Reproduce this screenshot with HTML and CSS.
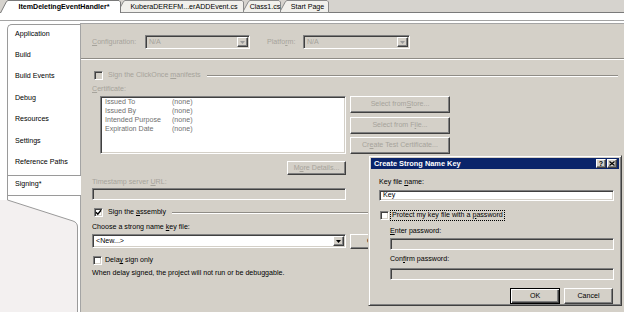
FILE: index.html
```html
<!DOCTYPE html>
<html>
<head>
<meta charset="utf-8">
<title>Signing</title>
<link rel="stylesheet" href="styles.css">
</head>
<body>
<div class="tabbar">
  <div class="tab t1 active">
    <svg class="tabshape" width="121" height="13"><polyline points="0.5,13 6.5,1.5 8,0.5 119,0.5 120.5,2 120.5,13" fill="#fff" stroke="#7a7a7a"/></svg>
    <span class="tabtext">ItemDeletingEventHandler*</span>
  </div>
  <div class="tab t2">
    <svg class="tabshape" width="127" height="13"><polygon points="0.5,12.5 6.5,1.5 8,0.5 125,0.5 126.5,2 126.5,12.5" fill="#f1f0ec" stroke="#8a8a8a"/></svg>
    <span class="tabtext">KuberaDEREFM...erADDEvent.cs</span>
  </div>
  <div class="tab t3">
    <svg class="tabshape" width="39" height="13"><polygon points="0.5,12.5 6.5,1.5 8,0.5 37,0.5 38.5,2 38.5,12.5" fill="#f1f0ec" stroke="#8a8a8a"/></svg>
    <span class="tabtext">Class1.cs</span>
  </div>
  <div class="tab t4">
    <svg class="tabshape" width="50" height="13"><polygon points="0.5,12.5 6.5,1.5 8,0.5 48,0.5 49.5,2 49.5,12.5" fill="#f1f0ec" stroke="#8a8a8a"/></svg>
    <span class="tabtext">Start Page</span>
  </div>
</div>
<div class="strip"></div>
<div class="main">
  <nav class="nav">
    <div class="navbox">
      <div class="navitem">Application</div>
      <div class="navitem">Build</div>
      <div class="navitem">Build Events</div>
      <div class="navitem">Debug</div>
      <div class="navitem">Resources</div>
      <div class="navitem">Settings</div>
      <div class="navitem">Reference Paths</div>
      <div class="navitem sel">Signing*</div>
    </div>
    <svg class="navtail" width="80" height="116" viewBox="0 0 80 116">
      <path d="M0 4 H7.5 L73 25 Q77.5 26.5 77.5 31 V116 H0 Z" fill="#f3f0f0"/>
      <path d="M7.5 0 V4 L73 25 Q77.5 26.5 77.5 31 V116" fill="none" stroke="#9a9a9a"/>
    </svg>
  </nav>
  <main class="content">
    <div class="cfg">
      <span class="dis cfg-l1"><u>C</u>onfiguration:</span>
      <span class="combo dis w105"><span class="ctext">N/A</span><span class="drop"><svg width="5" height="3"><polygon points="0,0 5,0 2.5,3" fill="#9a9a9a"/></svg></span></span>
      <span class="dis cfg-l2">Platfo<u>r</u>m:</span>
      <span class="combo dis w107"><span class="ctext">N/A</span><span class="drop"><svg width="5" height="3"><polygon points="0,0 5,0 2.5,3" fill="#9a9a9a"/></svg></span></span>
    </div>
    <div class="sep"></div>
    <div class="ghead gh1">
      <span class="chk dis"></span>
      <span class="dis">Sign the ClickOnce <u>m</u>anifests</span>
      <span class="gline"></span>
    </div>
    <div class="dis cert-l"><u>C</u>ertificate:</div>
    <div class="certrow">
      <div class="certbox">
        <div class="certline"><span class="k">Issued To</span><span>(none)</span></div>
        <div class="certline"><span class="k">Issued By</span><span>(none)</span></div>
        <div class="certline"><span class="k">Intended Purpose</span><span>(none)</span></div>
        <div class="certline"><span class="k">Expiration Date</span><span>(none)</span></div>
      </div>
      <div class="btncol">
        <span class="btn dis">Select from <u>S</u>tore...</span>
        <span class="btn dis">Select from F<u>i</u>le...</span>
        <span class="btn dis">Cr<u>e</u>ate Test Certificate...</span>
      </div>
    </div>
    <div class="morerow"><span class="btn dis more">M<u>o</u>re Details...</span></div>
    <div class="dis ts-l">Timestamp server <u>U</u>RL:</div>
    <div class="field dis ts"></div>
    <div class="ghead gh2">
      <span class="chk on"><svg width="7" height="7"><polyline points="1,3.2 2.8,5.2 6,1.2" fill="none" stroke="#000" stroke-width="1.4"/></svg></span>
      <span>Sign the <u>a</u>ssembly</span>
      <span class="gline"></span>
    </div>
    <div class="choose">Choose a strong name <u>k</u>ey file:</div>
    <div class="keyrow">
      <span class="combo w254"><span class="ctext">&lt;New...&gt;</span><span class="drop"><svg width="5" height="3"><polygon points="0,0 5,0 2.5,3" fill="#000"/></svg></span></span>
      <span class="btn chg">Change Password...</span>
    </div>
    <div class="delay"><span class="chk"></span><span>Dela<u>y</u> sign only</span></div>
    <div class="note">When delay signed, the project will not run or be debuggable.</div>
  </main>
</div>

<div class="dialog">
  <div class="dtitle">
    <span class="dtitle-text">Create Strong Name Key</span>
    <span class="tbtns">
      <span class="tb">?</span>
      <span class="tb"><svg width="6" height="5"><path d="M0.5 0.5 L5.5 4.5 M5.5 0.5 L0.5 4.5" stroke="#000" stroke-width="1.2"/></svg></span>
    </span>
  </div>
  <div class="dbody">
    <div class="dlbl first">Key file <u>n</u>ame:</div>
    <div class="field keyfield">Key</div>
    <div class="dchk"><span class="chk"></span><span class="focus">Protect my key file with a <u>p</u>assword</span></div>
    <div class="indent">
      <div class="dlbl l2"><u>E</u>nter password:</div>
      <div class="field dis pw"></div>
      <div class="dlbl l3">Con<u>f</u>irm password:</div>
      <div class="field dis pw pw2"></div>
    </div>
    <div class="dbtns">
      <span class="btn def">OK</span>
      <span class="btn cancel">Cancel</span>
    </div>
  </div>
</div>
</body>
</html>
```

FILE: styles.css
```css
* { box-sizing: border-box; }
html, body { margin: 0; padding: 0; }
body {
  width: 624px;
  height: 312px;
  overflow: hidden;
  position: relative;
  background: #fff;
  font-family: "Liberation Sans", Arial, sans-serif;
  font-size: 7.1px;
  line-height: 9px;
  color: #000;
}
u { text-decoration: underline; text-decoration-thickness: 0.6px; text-underline-offset: 1px; }
svg { display: block; }

/* ---------- document tabs ---------- */
.tabbar {
  display: flex;
  height: 13px;
  background: #d6d3ce;
  box-shadow: inset 0 -1px #7a7a7a;
}
.tab {
  position: relative;
  height: 13px;
  flex: none;
}
.tabshape { position: absolute; left: 0; top: 0; }
.tabtext {
  position: relative;
  display: flex;
  align-items: center;
  justify-content: center;
  height: 13px;
  padding-left: 7px;
  padding-top: 1px;
  white-space: nowrap;
}
.t1 { width: 121px; z-index: 4; }
.t1 .tabtext { font-weight: bold; }
.t2 { width: 127px; margin-left: -4px; z-index: 3; }
.t3 { width: 39px; margin-left: -2px; z-index: 2; }
.t4 { width: 50px; margin-left: -2px; z-index: 1; }

.strip {
  height: 8px;
  background: #fff;
  border-bottom: 1px solid #a4a4a4;
}

/* ---------- main ---------- */
.main {
  display: flex;
  height: 291px;
}
.nav {
  width: 80px;
  flex: none;
  background: #fff;
  padding-top: 3px;
  position: relative;
  z-index: 1;
  display: flex;
  flex-direction: column;
}
.navbox {
  margin-left: 7px;
  border-left: 1px solid #9a9a9a;
  border-top: 1px solid #9a9a9a;
  border-top-left-radius: 5px;
}
.navitem {
  height: 21.4px;
  display: flex;
  align-items: center;
  padding-left: 7px;
  padding-bottom: 3px;
  white-space: nowrap;
}
.navitem.sel {
  margin-right: -1px;
  background: #fff;
  border-top: 1px solid #9a9a9a;
  border-bottom: 1px solid #9a9a9a;
  padding-bottom: 2px;
}
.navtail { flex: none; }

.content {
  flex: 1;
  margin-top: 2px;
  border-top: 1px solid #a4a4a4;
  border-left: 1px solid #a4a4a4;
  background: #d4d0c8;
  padding: 11px 6px 0 11px;
}
.dis { color: #a6a39b; }

/* common controls */
.combo {
  display: flex;
  align-items: center;
  height: 14px;
  border: 1px solid;
  border-color: #808080 #fff #fff #808080;
  box-shadow: inset 1px 1px #404040, inset -1px -1px #d4d0c8;
  background: #fff;
  padding: 1px 1px 1px 2px;
}
.combo.dis { background: #d4d0c8; }
.ctext { flex: 1; white-space: nowrap; padding-left: 1px; }
.drop {
  width: 11px;
  height: 10px;
  flex: none;
  display: flex;
  align-items: center;
  justify-content: center;
  background: #d4d0c8;
  border: 1px solid;
  border-color: #fff #404040 #404040 #fff;
  box-shadow: inset -1px -1px #808080;
}
.field {
  border: 1px solid;
  border-color: #808080 #fff #fff #808080;
  box-shadow: inset 1px 1px #404040, inset -1px -1px #d4d0c8;
  background: #fff;
}
.field.dis { background: #d4d0c8; }
.chk {
  width: 9px;
  height: 9px;
  flex: none;
  border: 1px solid;
  border-color: #808080 #fff #fff #808080;
  box-shadow: inset 1px 1px #404040, inset -1px -1px #d4d0c8;
  background: #fff;
  display: flex;
  align-items: center;
  justify-content: center;
}
.chk.dis { background: #d4d0c8; }
.btn {
  display: flex;
  align-items: center;
  justify-content: center;
  white-space: nowrap;
  background: #d4d0c8;
  border: 1px solid;
  border-color: #fff #404040 #404040 #fff;
  box-shadow: inset -1px -1px #808080;
}

/* configuration row */
.cfg {
  display: flex;
  align-items: center;
  height: 14px;
}
.cfg-l1 { width: 53px; flex: none; }
.cfg-l2 { width: 36px; flex: none; margin-left: 17px; }
.w105 { width: 105px; }
.w107 { width: 107px; }
.w254 { width: 254px; }

.sep {
  margin: 9px -6px 0 -11px;
  height: 2px;
  border-top: 1px solid #8f8c86;
  border-bottom: 1px solid #fff;
}

.ghead {
  display: flex;
  align-items: center;
  height: 9px;
  white-space: nowrap;
}
.ghead .chk { margin-left: 2px; margin-right: 5px; }
.gline {
  flex: 1;
  height: 2px;
  margin-left: 6px;
  margin-right: 0;
  border-top: 1px solid #8f8c86;
  border-bottom: 1px solid #fff;
}
.gh1 { margin-top: 11px; }

.cert-l { margin-top: 5px; height: 9px; }
.certrow {
  display: flex;
  margin-top: 2px;
  margin-left: 8px;
}
.certbox {
  width: 246px;
  height: 58px;
  flex: none;
  border: 1px solid;
  border-color: #808080 #fff #fff #808080;
  box-shadow: inset 1px 1px #404040, inset -1px -1px #d4d0c8;
  background: #fff;
  padding: 1px 0 0 4px;
  color: #6f6f6f;
}
.certline { display: flex; height: 9px; white-space: nowrap; }
.certline .k { width: 67px; flex: none; }
.btncol {
  display: flex;
  flex-direction: column;
  gap: 3.5px;
  margin-left: 4px;
  width: 100px;
}
.btncol .btn { height: 17px; }

.morerow { margin-top: 7px; height: 14px; }
.more { width: 59px; height: 14px; margin-left: 195px; }

.ts-l { margin-top: 3px; height: 9px; }
.ts { margin-top: 1px; width: 254px; height: 12px; }

.gh2 { margin-top: 8px; }

.choose { margin-top: 6px; height: 9px; }
.keyrow {
  display: flex;
  align-items: flex-start;
  margin-top: 2px;
  height: 15px;
}
.chg {
  width: 100px;
  height: 15px;
  margin-left: 4px;
  flex: none;
  justify-content: flex-start;
  padding-left: 16px;
}

.delay {
  display: flex;
  align-items: center;
  margin-top: 7px;
  height: 9px;
}
.delay .chk { margin-left: 1px; margin-right: 3px; }
.note { margin-top: 4px; height: 9px; white-space: nowrap; }

/* ---------- dialog ---------- */
.dialog {
  position: absolute;
  left: 368px;
  top: 155px;
  width: 254px;
  height: 151px;
  background: #d4d0c8;
  border: 1px solid;
  border-color: #d4d0c8 #404040 #404040 #d4d0c8;
  box-shadow: inset 1px 1px #fff, inset -1px -1px #808080;
  padding: 2px;
  z-index: 5;
}
.dtitle {
  height: 11px;
  background: #0a246a;
  color: #fff;
  font-weight: bold;
  font-size: 7.4px;
  display: flex;
  align-items: center;
  justify-content: space-between;
  padding: 0 2px 0 3px;
}
.dtitle-text { white-space: nowrap; }
.tbtns { display: flex; gap: 1px; }
.tb {
  width: 10px;
  height: 9px;
  display: flex;
  align-items: center;
  justify-content: center;
  background: #d4d0c8;
  color: #000;
  font-size: 7px;
  border: 1px solid;
  border-color: #fff #404040 #404040 #fff;
  box-shadow: inset -1px -1px #808080;
}
.dbody { padding: 0 5px 0 8px; }
.dlbl { height: 9px; white-space: nowrap; }
.dlbl.first { margin-top: 9px; }
.keyfield {
  margin-top: 3px;
  height: 11px;
  padding-left: 3px;
  line-height: 9px;
}
.dchk {
  display: flex;
  align-items: center;
  margin-top: 9px;
  height: 10px;
}
.dchk .chk { margin-left: 1px; margin-right: 2px; }
.focus {
  outline: 1px dotted #000;
  outline-offset: 0;
  padding: 0 1px;
  white-space: nowrap;
  line-height: 9px;
}
.indent { padding-left: 11px; }
.dlbl.l2 { margin-top: 7px; }
.pw { margin-top: 2px; height: 12px; }
.dlbl.l3 { margin-top: 5px; }
.pw2 { margin-top: 4px; }
.dbtns {
  display: flex;
  justify-content: flex-end;
  gap: 4px;
  margin-top: 8px;
  margin-right: 1px;
}
.dbtns .btn { height: 16px; }
.def {
  width: 50px;
  border: 1px solid #000;
  box-shadow: inset 1px 1px #fff, inset -1px -1px #404040, inset -2px -2px #808080;
}
.cancel { width: 49px; }
```
